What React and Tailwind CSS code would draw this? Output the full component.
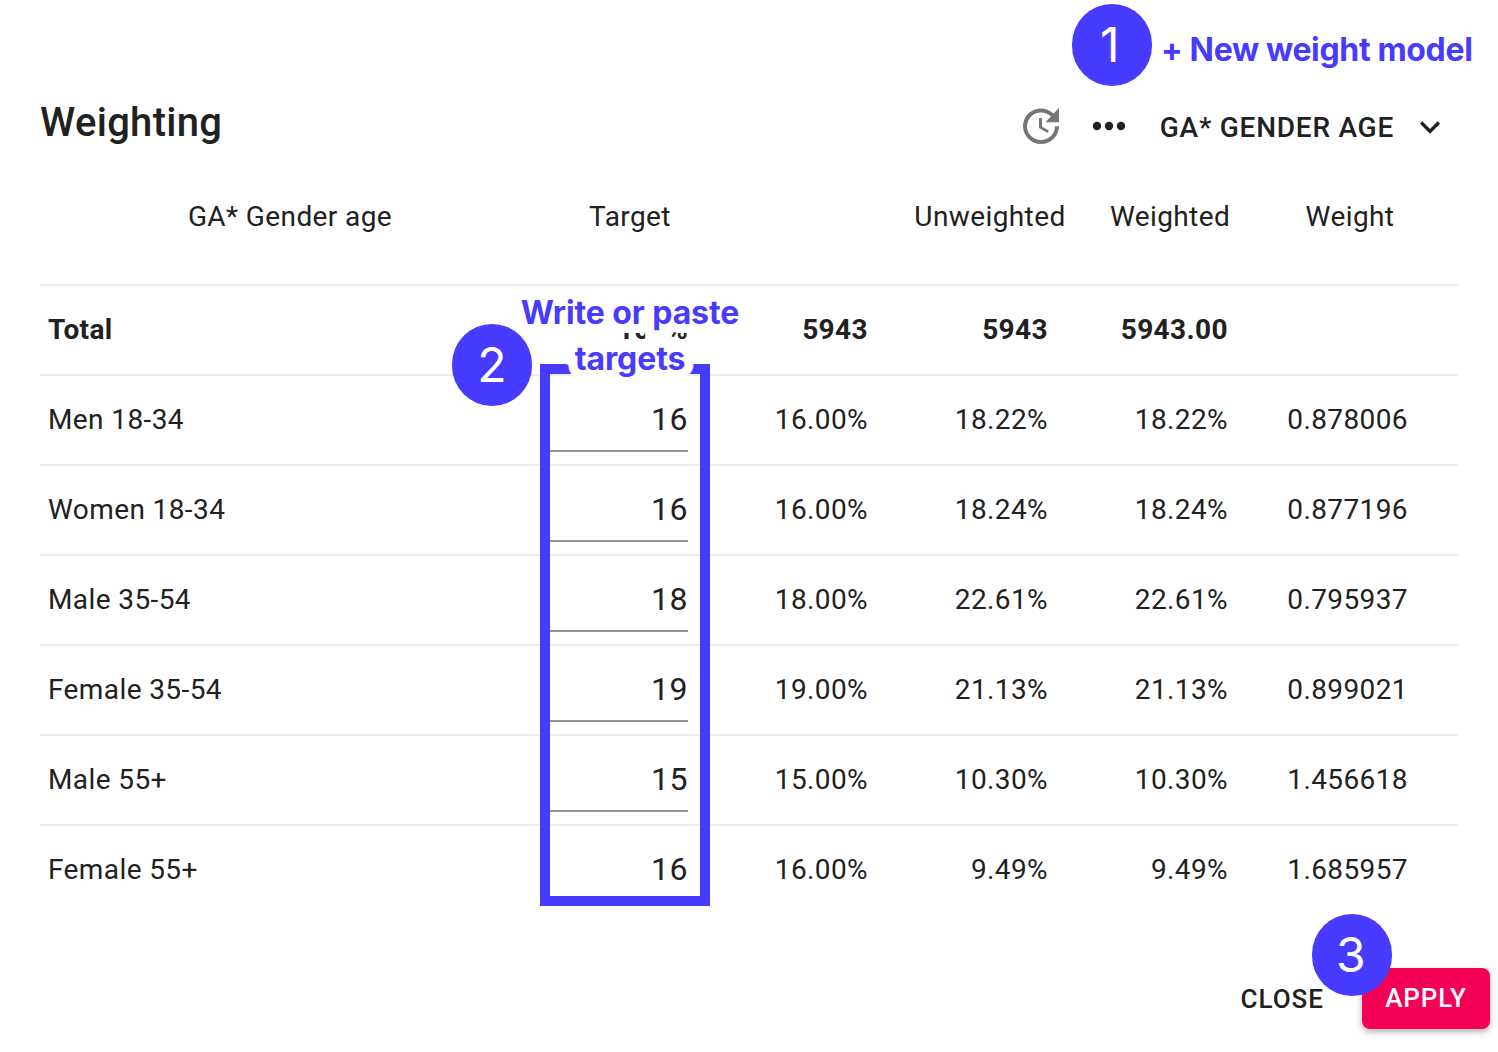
import React from 'react';

const rows = [
  { name: 'Men 18-34', target: '16', pct: '16.00%', unweighted: '18.22%', weighted: '18.22%', weight: '0.878006' },
  { name: 'Women 18-34', target: '16', pct: '16.00%', unweighted: '18.24%', weighted: '18.24%', weight: '0.877196' },
  { name: 'Male 35-54', target: '18', pct: '18.00%', unweighted: '22.61%', weighted: '22.61%', weight: '0.795937' },
  { name: 'Female 35-54', target: '19', pct: '19.00%', unweighted: '21.13%', weighted: '21.13%', weight: '0.899021' },
  { name: 'Male 55+', target: '15', pct: '15.00%', unweighted: '10.30%', weighted: '10.30%', weight: '1.456618' },
  { name: 'Female 55+', target: '16', pct: '16.00%', unweighted: '9.49%', weighted: '9.49%', weight: '1.685957' },
];

const gridCols = 'grid grid-cols-[500px_180px_180px_180px_180px_198px]';

function Badge({ className, children }) {
  return (
    <div className={`absolute w-[80px] h-[82px] rounded-full bg-[#473bff] text-white flex items-center justify-center text-[48px] font-['Inter',sans-serif] ${className}`}>
      {children}
    </div>
  );
}

function NumCell({ children }) {
  return <div className="pr-[32px] text-right">{children}</div>;
}

export default function App() {
  return (
    <div className="relative w-[1498px] h-[1052px] overflow-hidden bg-white text-[#212121] font-['Roboto',sans-serif] text-[28px] tracking-[0.4px]">
      <div className="flex flex-col pt-[80px] pl-[40px] pr-[40px]">
        {/* Title bar */}
        <div className="flex items-center justify-between h-[92px] pr-[8px]">
          <h1 className="text-[40px] font-medium tracking-[0.3px] -mt-[6px]">Weighting</h1>
          <div className="flex items-center">
            <svg width="48" height="48" viewBox="0 0 24 24" fill="#757575">
              <path d="M21 10.12h-6.78l2.74-2.82c-2.73-2.7-7.15-2.8-9.88-.1-2.73 2.71-2.73 7.08 0 9.79s7.15 2.71 9.88 0C18.32 15.65 19 14.08 19 12.1h2c0 1.98-.88 4.55-2.64 6.29-3.51 3.48-9.21 3.48-12.72 0-3.5-3.47-3.53-9.11-.02-12.58s9.14-3.47 12.65 0L21 3v7.12zM12.5 8v4.25l3.5 2.08-.72 1.21L11 13V8h1.5z" />
            </svg>
            <svg className="ml-[27px]" width="34" height="10" viewBox="0 0 34 10" fill="#212121">
              <circle cx="5" cy="5" r="4.2" />
              <circle cx="17" cy="5" r="4.2" />
              <circle cx="29" cy="5" r="4.2" />
            </svg>
            <span className="ml-[34px] mt-[4px] font-medium text-[28px] tracking-[0.75px]">GA* GENDER AGE</span>
            <svg className="ml-[16px] mt-[1px]" width="40" height="40" viewBox="0 0 24 24" fill="#212121">
              <path d="M16.59 8.59L12 13.17 7.41 8.59 6 10l6 6 6-6z" />
            </svg>
          </div>
        </div>

        {/* Table head */}
        <div className={`${gridCols} h-[114px] pb-[22px] items-center text-center border-b-2 border-[#eeeeee]`}>
          <div>GA* Gender age</div>
          <div>Target</div>
          <div />
          <div>Unweighted</div>
          <div>Weighted</div>
          <div className="pr-[18px]">Weight</div>
        </div>

        {/* Total row */}
        <div className={`${gridCols} h-[90px] items-center font-bold border-b-2 border-[#eeeeee]`}>
          <div className="pl-[8px]">Total</div>
          <div className="pr-[32px] text-right">100%</div>
          <NumCell>5943</NumCell>
          <NumCell>5943</NumCell>
          <NumCell>5943.00</NumCell>
          <div />
        </div>

        {rows.map((row, i) => (
          <div
            key={row.name}
            className={`${gridCols} h-[90px] items-center border-b-2 ${i < rows.length - 1 ? 'border-[#eeeeee]' : 'border-transparent'}`}
          >
            <div className="pl-[8px]">{row.name}</div>
            <div className="self-start pl-[10px] pr-[32px]">
              <div className={`h-[76px] flex items-center justify-end text-[32px] tracking-[0.5px] pt-[11px] border-b-2 ${i < rows.length - 1 ? 'border-[#949494]' : 'border-transparent'}`}>
                {row.target}
              </div>
            </div>
            <NumCell>{row.pct}</NumCell>
            <NumCell>{row.unweighted}</NumCell>
            <NumCell>{row.weighted}</NumCell>
            <div className="pr-[50px] text-right">{row.weight}</div>
          </div>
        ))}

        {/* Actions */}
        <div className="flex items-center justify-end mt-[52px] -mr-[32px]">
          <button className="font-medium text-[26px] tracking-[1px] mr-[38px] mt-[1px]">CLOSE</button>
          <button className="w-[128px] h-[61px] rounded-[8px] bg-[#f50057] text-white font-medium text-[26px] tracking-[0.9px] shadow-[0_3px_6px_rgba(0,0,0,0.3)]">
            APPLY
          </button>
        </div>
      </div>

      {/* Annotations laid over the dialog */}
      <Badge className="left-[1072px] top-[4px] pr-[4px]">1</Badge>
      <div className="absolute left-[1161px] top-[29px] font-['Inter',sans-serif] font-bold text-[32px] leading-[42px] tracking-[-0.35px] text-[#473bff] whitespace-nowrap">
        + New weight model
      </div>

      <div className="absolute left-[540px] top-[364px] w-[170px] h-[542px] border-[10px] border-[#473bff]" />
      <div className="absolute left-[500px] top-[290px] w-[260px] text-center font-['Inter',sans-serif] font-bold text-[32px] leading-[46px] tracking-[-0.1px] text-[#473bff] [-webkit-text-stroke:18px_white] [paint-order:stroke_fill]">
        Write or paste
        <br />
        targets
      </div>
      <Badge className="left-[452px] top-[324px]">2</Badge>
      <Badge className="left-[1312px] top-[914px] pr-[2px]">3</Badge>
    </div>
  );
}
